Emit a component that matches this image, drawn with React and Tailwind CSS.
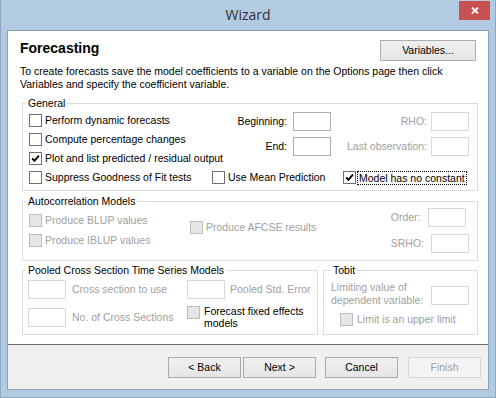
import React from 'react';

const ui = "font-['Liberation_Sans',Arial,sans-serif] text-[10.5px] leading-[13px]";

function Box({ checked, disabled }) {
  return (
    <span
      className={`flex h-[13px] w-[13px] shrink-0 items-center justify-center border ${
        disabled ? 'border-[#bcbcbc] bg-[#e6e6e6]' : 'border-[#707070] bg-white'
      }`}
    >
      {checked && (
        <svg width="9" height="9" viewBox="0 0 9 9">
          <path d="M1.2 4.4 L3.4 6.8 L7.9 1.6" fill="none" stroke="#000" strokeWidth="1.9" />
        </svg>
      )}
    </span>
  );
}

function Check({ label, checked, disabled, className = '' }) {
  return (
    <div className={`flex h-[19px] items-center ${className}`}>
      <Box checked={checked} disabled={disabled} />
      <span className={`ml-[3px] whitespace-nowrap ${disabled ? 'text-[#a0a0a0]' : 'text-black'}`}>{label}</span>
    </div>
  );
}

function Field({ disabled }) {
  return (
    <span
      className={`block h-[19px] w-[38px] shrink-0 border bg-white ${
        disabled ? 'border-[#d9d9d9]' : 'border-[#abadb3]'
      }`}
    />
  );
}

function Group({ title, legendClass = 'ml-[3px]', className = '', children }) {
  return (
    <fieldset className={`min-w-0 border border-[#dcdcdc] ${className}`}>
      <legend className={`${legendClass} px-[2px] leading-[14px] text-black`}>{title}</legend>
      {children}
    </fieldset>
  );
}

function Button({ children, disabled }) {
  return (
    <div
      className={`flex h-[21px] w-[73px] items-center justify-center border ${
        disabled
          ? 'border-[#d5d5d5] bg-[#f4f4f4] text-[#a0a0a0]'
          : 'border-[#acacac] bg-gradient-to-b from-[#f0f0f0] to-[#e5e5e5] text-black'
      }`}
    >
      {children}
    </div>
  );
}

export default function App() {
  return (
    <div className={`flex h-[398px] w-[496px] flex-col border-x border-b border-[#8ea8c2] bg-[#b2cbe3] ${ui}`}>
      {/* title bar */}
      <div className="grid h-[30px] grid-cols-[1fr_auto_1fr]">
        <div />
        <div className="pt-[5px] font-['Open_Sans',sans-serif] text-[14px] leading-[20px] text-[#333]">Wizard</div>
        <div className="flex justify-end pr-[5px] pt-[1px]">
          <div className="flex h-[19px] w-[31px] items-center justify-center bg-[#c75050]">
            <svg width="8" height="7" viewBox="0 0 8 7">
              <path d="M1 0.5 L7 6.5 M7 0.5 L1 6.5" stroke="#fff" strokeWidth="1.8" />
            </svg>
          </div>
        </div>
      </div>

      {/* client */}
      <div className="ml-[6px] flex h-[360px] w-[482px] flex-col border border-[#8c9fb3] bg-[#f0f0f0]">
        <div className="h-[314px] border-b border-[#6d6d6d] bg-white">
          <div className="flex items-start justify-between px-[12px] pt-[9px]">
            <div className="font-['Liberation_Sans',Arial,sans-serif] text-[14px] font-bold leading-[16px] text-black">
              Forecasting
            </div>
            <div className="flex h-[21px] w-[96px] items-center justify-center border border-[#acacac] bg-gradient-to-b from-[#f0f0f0] to-[#e5e5e5]">
              Variables...
            </div>
          </div>
          <p className="mt-[4px] px-[12px] text-black">
            To create forecasts save the model coefficients to a variable on the Options page then click
            <br />
            Variables and specify the coefficient variable.
          </p>

          <div className="mt-[5px] flex flex-col pl-[14px] pr-[10px]">
            {/* General */}
            <Group title="General" className="pb-[3px]">
              <div className="flex pl-[6px]">
                <div className="mt-[1px] flex w-[171px] flex-col">
                  <Check label="Perform dynamic forecasts" />
                  <Check label="Compute percentage changes" />
                  <Check label="Plot and list predicted / residual output" checked />
                </div>
                <div className="mt-[2px] flex flex-col gap-[6px]">
                  <div className="flex h-[19px] items-center">
                    <span className="w-[87px] text-right">Beginning:</span>
                    <span className="ml-[6px]"><Field /></span>
                    <span className="w-[96px] text-right text-[#a0a0a0]">RHO:</span>
                    <span className="ml-[4px]"><Field disabled /></span>
                  </div>
                  <div className="flex h-[19px] items-center">
                    <span className="w-[87px] text-right">End:</span>
                    <span className="ml-[6px]"><Field /></span>
                    <span className="w-[96px] text-right text-[#a0a0a0]">Last observation:</span>
                    <span className="ml-[4px]"><Field disabled /></span>
                  </div>
                </div>
              </div>
              <div className="flex pl-[6px]">
                <Check label="Suppress Goodness of Fit tests" className="w-[183px]" />
                <Check label="Use Mean Prediction" className="w-[131px]" />
                <div className="flex h-[19px] items-center">
                  <Box checked />
                  <span className="ml-[1px] border border-dotted border-black px-[1px] leading-[12px]">
                    Model has no constant
                  </span>
                </div>
              </div>
            </Group>

            {/* Autocorrelation */}
            <Group title="Autocorrelation Models" className="mt-[3px] pb-[7px]">
              <div className="flex pl-[6px] pr-[8px]">
                <div className="mt-[2px] flex w-[161px] flex-col">
                  <Check label="Produce BLUP values" disabled className="h-[20px]" />
                  <Check label="Produce IBLUP values" disabled className="h-[20px]" />
                </div>
                <Check label="Produce AFCSE results" disabled className="mt-[10px]" />
                <div className="ml-auto flex flex-col gap-[7px]">
                  <div className="flex h-[19px] items-center text-[#a0a0a0]">
                    <span>Order:</span>
                    <span className="ml-[7px]"><Field disabled /></span>
                  </div>
                  <div className="flex h-[19px] items-center text-[#a0a0a0]">
                    <span>SRHO:</span>
                    <span className="ml-[7px]"><Field disabled /></span>
                  </div>
                </div>
              </div>
            </Group>

            <div className="mt-[2px] flex gap-[5px]">
              {/* Pooled */}
              <Group title="Pooled Cross Section Time Series Models" className="w-[296px] pb-[5px]">
                <div className="flex pl-[5px] text-[#a0a0a0]">
                  <div className="mt-[3px] flex w-[159px] flex-col gap-[9px]">
                    <div className="flex h-[19px] items-center">
                      <Field disabled />
                      <span className="ml-[6px] whitespace-nowrap">Cross section to use</span>
                    </div>
                    <div className="flex h-[19px] items-center">
                      <Field disabled />
                      <span className="ml-[6px] whitespace-nowrap">No. of Cross Sections</span>
                    </div>
                  </div>
                  <div className="mt-[3px] flex flex-col">
                    <div className="flex h-[19px] items-center">
                      <Field disabled />
                      <span className="ml-[5px] whitespace-nowrap">Pooled Std. Error</span>
                    </div>
                    <div className="mt-[6px] flex items-start">
                      <span className="mt-[1px]"><Box disabled /></span>
                      <span className="ml-[4px] leading-[12px] text-black">
                        Forecast fixed effects
                        <br />
                        models
                      </span>
                    </div>
                  </div>
                </div>
              </Group>

              {/* Tobit */}
              <Group title="Tobit" legendClass="ml-[7px]" className="w-[155px] pb-[5px]">
                <div className="flex items-start pl-[7px] pr-[8px] text-[#a0a0a0]">
                  <div className="mt-[4px] whitespace-nowrap">
                    Limiting value of
                    <br />
                    dependent variable:
                  </div>
                  <span className="ml-auto mt-[9px]"><Field disabled /></span>
                </div>
                <Check label="Limit is an upper limit" disabled className="mt-[3px] pl-[16px] [&>span:last-child]:ml-[4px]" />
              </Group>
            </div>
          </div>
        </div>

        {/* buttons */}
        <div className="flex justify-end pr-[7px] pt-[12px]">
          <Button>&lt; Back</Button>
          <div className="ml-[2px]"><Button>Next &gt;</Button></div>
          <div className="ml-[9px]"><Button>Cancel</Button></div>
          <div className="ml-[10px]"><Button disabled>Finish</Button></div>
        </div>
      </div>
    </div>
  );
}
